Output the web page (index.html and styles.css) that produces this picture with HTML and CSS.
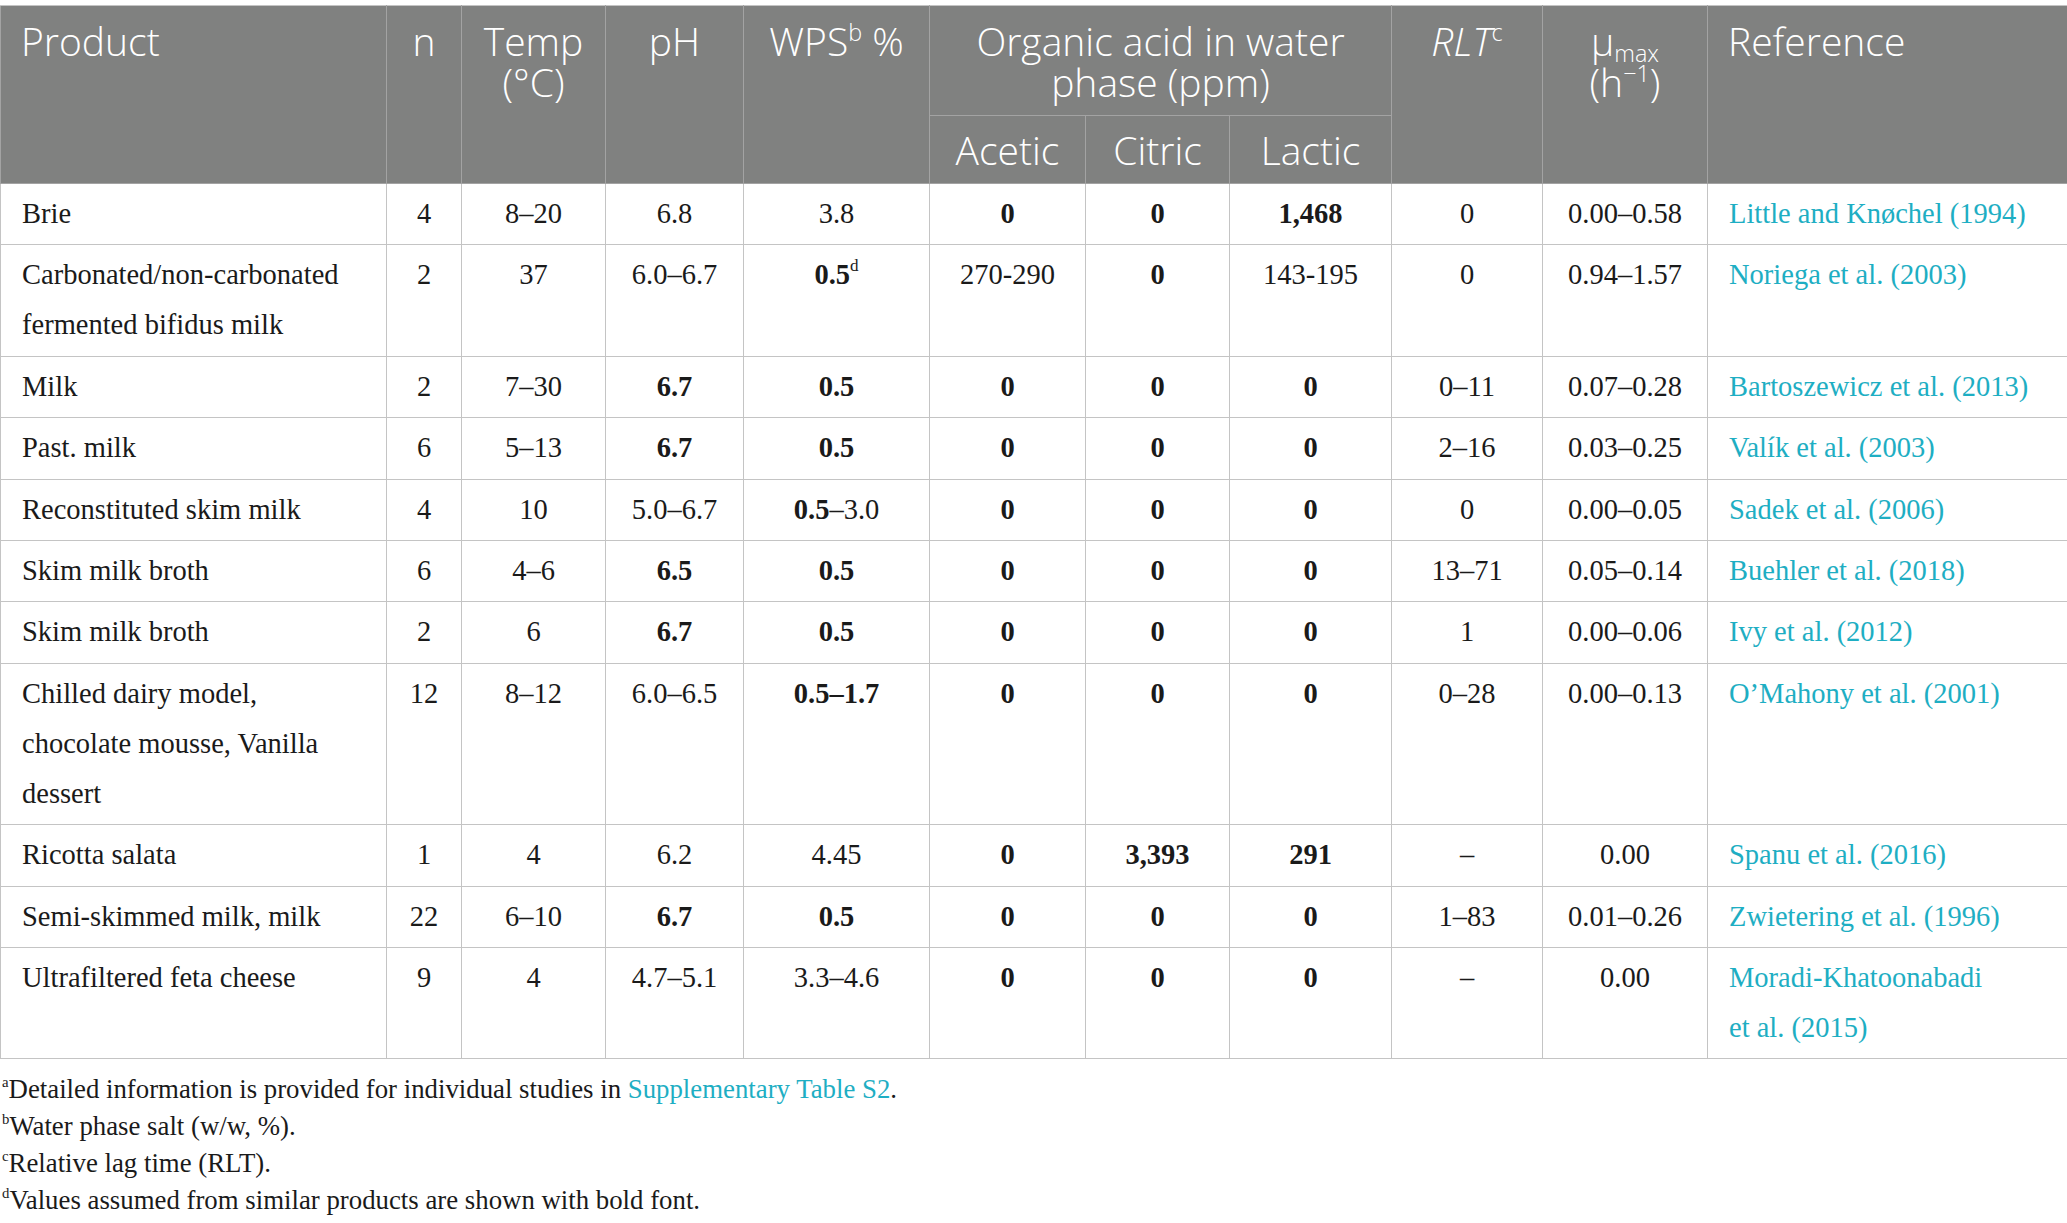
FILE: index.html
```html
<!DOCTYPE html>
<html lang="en">
<head>
    <meta charset="UTF-8">
    <title>Listeria growth in dairy products</title>
    <link rel="stylesheet" href="styles.css">
</head>
<body>
    <table class="data-table">
        <colgroup>
            <col class="c-product">
            <col class="c-n">
            <col class="c-temp">
            <col class="c-ph">
            <col class="c-wps">
            <col class="c-acetic">
            <col class="c-citric">
            <col class="c-lactic">
            <col class="c-rlt">
            <col class="c-mu">
            <col class="c-ref">
        </colgroup>
        <thead>
            <tr class="head-top">
                <th rowspan="2" class="left">Product</th>
                <th rowspan="2">n</th>
                <th rowspan="2">Temp<br>(°C)</th>
                <th rowspan="2">pH</th>
                <th rowspan="2">WPS<sup>b</sup> %</th>
                <th colspan="3">Organic acid in water<br>phase (ppm)</th>
                <th rowspan="2"><i>RLT</i><sup>c</sup></th>
                <th rowspan="2">μ<sub>max</sub><br>(h<sup>−1</sup>)</th>
                <th rowspan="2" class="left">Reference</th>
            </tr>
            <tr class="head-sub">
                <th>Acetic</th>
                <th>Citric</th>
                <th>Lactic</th>
            </tr>
        </thead>
        <tbody>
            <tr>
                <td class="left">Brie</td>
                <td>4</td><td>8–20</td><td>6.8</td><td>3.8</td>
                <td><b>0</b></td><td><b>0</b></td><td><b>1,468</b></td>
                <td>0</td><td>0.00–0.58</td>
                <td class="left"><a href="#">Little and Knøchel (1994)</a></td>
            </tr>
            <tr>
                <td class="left">Carbonated/non-carbonated<br>fermented bifidus milk</td>
                <td>2</td><td>37</td><td>6.0–6.7</td><td><b>0.5</b><sup>d</sup></td>
                <td>270-290</td><td><b>0</b></td><td>143-195</td>
                <td>0</td><td>0.94–1.57</td>
                <td class="left"><a href="#">Noriega et al. (2003)</a></td>
            </tr>
            <tr>
                <td class="left">Milk</td>
                <td>2</td><td>7–30</td><td><b>6.7</b></td><td><b>0.5</b></td>
                <td><b>0</b></td><td><b>0</b></td><td><b>0</b></td>
                <td>0–11</td><td>0.07–0.28</td>
                <td class="left"><a href="#">Bartoszewicz et al. (2013)</a></td>
            </tr>
            <tr>
                <td class="left">Past. milk</td>
                <td>6</td><td>5–13</td><td><b>6.7</b></td><td><b>0.5</b></td>
                <td><b>0</b></td><td><b>0</b></td><td><b>0</b></td>
                <td>2–16</td><td>0.03–0.25</td>
                <td class="left"><a href="#">Valík et al. (2003)</a></td>
            </tr>
            <tr>
                <td class="left">Reconstituted skim milk</td>
                <td>4</td><td>10</td><td>5.0–6.7</td><td><b>0.5</b>–3.0</td>
                <td><b>0</b></td><td><b>0</b></td><td><b>0</b></td>
                <td>0</td><td>0.00–0.05</td>
                <td class="left"><a href="#">Sadek et al. (2006)</a></td>
            </tr>
            <tr>
                <td class="left">Skim milk broth</td>
                <td>6</td><td>4–6</td><td><b>6.5</b></td><td><b>0.5</b></td>
                <td><b>0</b></td><td><b>0</b></td><td><b>0</b></td>
                <td>13–71</td><td>0.05–0.14</td>
                <td class="left"><a href="#">Buehler et al. (2018)</a></td>
            </tr>
            <tr>
                <td class="left">Skim milk broth</td>
                <td>2</td><td>6</td><td><b>6.7</b></td><td><b>0.5</b></td>
                <td><b>0</b></td><td><b>0</b></td><td><b>0</b></td>
                <td>1</td><td>0.00–0.06</td>
                <td class="left"><a href="#">Ivy et al. (2012)</a></td>
            </tr>
            <tr>
                <td class="left">Chilled dairy model,<br>chocolate mousse, Vanilla<br>dessert</td>
                <td>12</td><td>8–12</td><td>6.0–6.5</td><td><b>0.5–1.7</b></td>
                <td><b>0</b></td><td><b>0</b></td><td><b>0</b></td>
                <td>0–28</td><td>0.00–0.13</td>
                <td class="left"><a href="#">O’Mahony et al. (2001)</a></td>
            </tr>
            <tr>
                <td class="left">Ricotta salata</td>
                <td>1</td><td>4</td><td>6.2</td><td>4.45</td>
                <td><b>0</b></td><td><b>3,393</b></td><td><b>291</b></td>
                <td>–</td><td>0.00</td>
                <td class="left"><a href="#">Spanu et al. (2016)</a></td>
            </tr>
            <tr>
                <td class="left">Semi-skimmed milk, milk</td>
                <td>22</td><td>6–10</td><td><b>6.7</b></td><td><b>0.5</b></td>
                <td><b>0</b></td><td><b>0</b></td><td><b>0</b></td>
                <td>1–83</td><td>0.01–0.26</td>
                <td class="left"><a href="#">Zwietering et al. (1996)</a></td>
            </tr>
            <tr>
                <td class="left">Ultrafiltered feta cheese</td>
                <td>9</td><td>4</td><td>4.7–5.1</td><td>3.3–4.6</td>
                <td><b>0</b></td><td><b>0</b></td><td><b>0</b></td>
                <td>–</td><td>0.00</td>
                <td class="left"><a href="#">Moradi-Khatoonabadi<br>et al. (2015)</a></td>
            </tr>
        </tbody>
    </table>

    <div class="notes">
        <p><sup>a</sup>Detailed information is provided for individual studies in <a href="#">Supplementary Table S2</a>.</p>
        <p><sup>b</sup>Water phase salt (w/w, %).</p>
        <p><sup>c</sup>Relative lag time (RLT).</p>
        <p><sup>d</sup>Values assumed from similar products are shown with bold font.</p>
    </div>
</body>
</html>
```

FILE: styles.css
```css
body {
    margin: 0;
    padding-top: 5px;
    background: #fff;
    color: #1a1a1a;
    font-family: 'Liberation Serif', 'Times New Roman', serif;
}
a {
    color: #1eaec3;
    text-decoration: none;
}
.data-table {
    width: 2067px;
    border-collapse: collapse;
    table-layout: fixed;
}
.c-product { width: 386px; }
.c-n { width: 75px; }
.c-temp { width: 144px; }
.c-ph { width: 138px; }
.c-wps { width: 186px; }
.c-acetic { width: 156px; }
.c-citric { width: 144px; }
.c-lactic { width: 162px; }
.c-rlt { width: 151px; }
.c-mu { width: 165px; }
.c-ref { width: 360px; }
.data-table th {
    background-color: #808180;
    color: #fff;
    font-family: 'Open Sans', 'Noto Sans', sans-serif;
    font-weight: 300;
    font-size: 39px;
    line-height: 41px;
    text-align: center;
    vertical-align: top;
    padding: 14px 14px 13px;
    border: 1px solid #a3a3a3;
    border-top-color: #c4c4c4;
}
.head-top th {
    height: 82px;
}
.head-sub th {
    padding: 13px 10px;
}
.data-table th sup,
.data-table th sub {
    font-size: 0.6em;
    line-height: 0;
}
.data-table th sub {
    vertical-align: -0.25em;
}
.data-table th sup {
    vertical-align: 0.65em;
}
.data-table th.left {
    text-align: left;
    padding-left: 20px;
}
.data-table td {
    font-size: 28.5px;
    line-height: 50px;
    text-align: center;
    vertical-align: top;
    padding: 5px 12px 5.4px;
    border: 1px solid #c4c4c4;
}
.data-table td.left {
    text-align: left;
    padding-left: 21px;
    padding-right: 10px;
}
.data-table td b {
    font-weight: 700;
}
.data-table td sup {
    font-size: 0.6em;
    line-height: 0;
    vertical-align: 0.75em;
}
.notes {
    margin-top: 12px;
    padding-left: 2px;
    font-size: 26.8px;
    line-height: 37px;
}
.notes p {
    margin: 0;
}
.notes sup {
    font-size: 0.55em;
    line-height: 0;
    vertical-align: 0.75em;
}
```
